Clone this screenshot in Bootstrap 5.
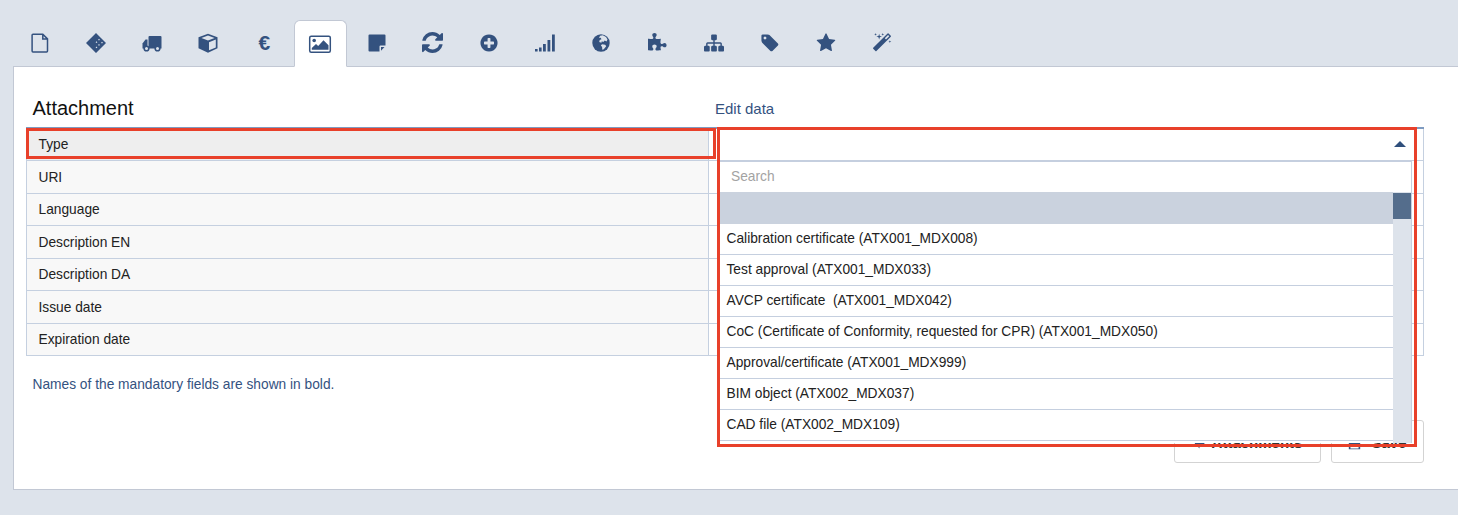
<!DOCTYPE html>
<html lang="en">
<head>
<meta charset="utf-8">
<title>Attachment</title>
<link href="https://cdn.jsdelivr.net/npm/bootstrap@5.3.0/dist/css/bootstrap.min.css" rel="stylesheet">
<style>
html,body{height:515px;overflow:hidden}
body{background:#dde3eb;font-family:"Liberation Sans",Arial,sans-serif;font-size:13.76px;color:#222;line-height:1.2}
.tabstrip{padding:20px 0 0 13px;gap:3.2px;border:0;position:relative;z-index:2;margin-bottom:-1px}
.tabstrip .nav-link{width:53px;height:47px;padding:0 0 2px;display:flex;align-items:center;justify-content:center;border:1px solid transparent;border-radius:6px 6px 0 0;color:#34527f;background:transparent;margin:0}
.tabstrip .nav-link.active{background:#fff;border-color:#c2c8d4 #c2c8d4 #fff;color:#34527f}
.tabstrip svg{fill:currentColor;display:block}
.euro{font-size:21px;font-weight:700;line-height:1}
.panelbox{margin-left:13px;height:424px;background:#fff;border:1px solid #c2c8d4;border-right:0;padding:0 34px 0 12px}
.headline{height:60px;align-items:flex-end;padding-bottom:8px}
.headline h1{width:682px;margin:0;padding-left:6.500px;font-size:20px;font-weight:400;color:#111;line-height:22px}
.headline span{padding-left:7px;font-size:15px;color:#34527f;line-height:21px}
.formwrap{position:relative}
.attrtable{table-layout:fixed;margin:0;border-color:#c5d0e0;--bs-table-border-color:#c5d0e0;border-top:2px solid #7f9bc0}
.attrtable th,.attrtable td{height:32.5px;padding:1.500px 11.500px 0;vertical-align:middle;font-size:13.76px;line-height:16px;font-weight:400;color:#222;box-shadow:none}
.attrtable th{width:682px;background:#f8f8f8}
.attrtable tr:first-child th{background:#eee}
.attrtable td{background:#fff}
.picker{position:absolute;left:694px;top:2px;width:692px;background:#fff}
.pickhead{height:31px;position:relative}
.caret{position:absolute;right:6px;top:12px;width:0;height:0;border-left:6px solid transparent;border-right:6px solid transparent;border-bottom:6px solid #2f4f7c}
.pickbody{border-top:2px solid #c5cfdf;border-right:1px solid #c5cfdf;height:283px;overflow:hidden}
.picksearch{height:30px;padding:0 11px;line-height:29px;color:#a3a3a3;font-size:13.76px}
.pickrows{height:252px;margin:0}
.picklist{flex:1;min-width:0}
.picklist .list-group-item{height:31px;padding:0 6.500px;line-height:29px;border:0;border-bottom:1px solid #c5cfdf;border-radius:0;color:#222;font-size:13.76px;white-space:pre}
.picklist .list-group-item.active{background:#cad2de;border-color:#cad2de;height:32px}
.pickscroll{width:18px;background:#dde3eb;padding-top:1px}
.pickscroll i{display:block;height:26px;background:#546d8c}
.redbox{position:absolute;border:3px solid #e8402a;pointer-events:none}
.redleft{left:0;top:1px;width:690px;height:31px}
.redright{left:691px;top:0;width:700px;height:320px}
.mandnote{margin:21px 0 0;padding-left:6.500px;color:#34527f;font-size:13.76px;line-height:16px}
.actionbar{justify-content:flex-end;gap:10px;margin-top:27px}
.actbtn{height:43px;border:1px solid #d3d3d3;border-radius:3px;background:#fff;color:#333;font-size:15px;font-weight:700;padding:4px 0 0;display:flex;align-items:center;justify-content:center;gap:6px}
.actbtn svg{fill:#34527f;display:block}
.btnback{width:147px}
.btnsave{width:93px;gap:10px}
</style>
</head>
<body>
<ul class="nav nav-tabs tabstrip">
<li class="nav-item"><a class="nav-link" href="#"><svg width="24" height="24" viewBox="0 0 24 24"><path d="M5 3.200h9.800l4.700 4.700v12.200q0 .9-.9.9H5q-.9 0-.9-.9V4.100q0-.9.9-.9z M14.800 3.200v4.700h4.700" fill="none" stroke="currentColor" stroke-width="1.500"/></svg></a></li>
<li class="nav-item"><a class="nav-link" href="#"><svg width="24" height="24" viewBox="0 0 24 24"><path fill-rule="evenodd" d="M2 12L12 2 22 12 12 22z M15 7.800l.9.9-.9.9-.9-.9z M18 10.800l.9.9-.9.9-.9-.9z M12.500 10.300l.9.9-.9.9-.9-.9z M15 13l.9.9-.9.9-.9-.9z M12.500 15.500l.9.9-.9.9-.9-.9z"/></svg></a></li>
<li class="nav-item"><a class="nav-link" href="#"><svg width="24" height="24" viewBox="0 0 24 24"><path d="M8.500 6a1 1 0 0 1 1-1h11a1 1 0 0 1 1 1v11.500h-13z"/><path d="M7.500 8.500H5.500L2.500 12.500v5h5z"/><circle cx="6.500" cy="17.500" r="2.300" fill="#dde3eb" stroke="currentColor" stroke-width="1.600"/><circle cx="17.500" cy="17.500" r="2.300" fill="#dde3eb" stroke="currentColor" stroke-width="1.600"/></svg></a></li>
<li class="nav-item"><a class="nav-link" href="#"><svg width="24" height="24" viewBox="0 0 24 24"><path d="M12 2.800l9.500 3.500v11L12 21.700l-9.500-4.400v-11z"/><path d="M12 4.600l6.600 2.500L12 9.600 5.400 7.100z M13 11.200l6.800-2.700v7.900L13 19.300z" fill="#dde3eb"/></svg></a></li>
<li class="nav-item"><a class="nav-link" href="#"><span class="euro">€</span></a></li>
<li class="nav-item"><a class="nav-link active" href="#"><svg width="24" height="24" viewBox="0 0 24 24"><rect x="1.700" y="5.200" width="20.600" height="16" rx="1.500" fill="none" stroke="currentColor" stroke-width="1.500"/><circle cx="6.200" cy="9.500" r="1.800"/><path d="M3.800 18.800V17l4.200-4 2.200 2 5.300-5.800 5 5v4.600z"/></svg></a></li>
<li class="nav-item"><a class="nav-link" href="#"><svg width="24" height="24" viewBox="0 0 24 24"><path d="M4.500 3.500h15a1 1 0 0 1 1 1v10h-5a1 1 0 0 0-1 1v5h-10a1 1 0 0 1-1-1v-15a1 1 0 0 1 1-1z"/><path d="M16 16h3.500L16 19.800z"/></svg></a></li>
<li class="nav-item"><a class="nav-link" href="#"><svg width="21" height="21" viewBox="0 0 1536 1536"><path d="M1511 928q0 5-1 7-64 268-268 434.500t-478 166.500q-146 0-282.500-55t-243.500-157l-129 129q-19 19-45 19t-45-19-19-45v-448q0-26 19-45t45-19h448q26 0 45 19t19 45-19 45l-137 137q71 66 161 102t187 36q134 0 250-65t186-179q11-17 53-117 8-23 30-23h192q13 0 22.500 9.500t9.500 22.500zm25-800v448q0 26-19 45t-45 19h-448q-26 0-45-19t-19-45 19-45l138-138q-148-137-349-137-134 0-250 65t-186 179q-11 17-53 117-8 23-30 23h-199q-13 0-22.500-9.500t-9.500-22.500v-7q65-268 270-434.500t480-166.500q146 0 284 55.500t245 156.500l130-129q19-19 45-19t45 19 19 45z"/></svg></a></li>
<li class="nav-item"><a class="nav-link" href="#"><svg width="20" height="20" viewBox="0 0 1792 1792"><path d="M1344 960v-128q0-26-19-45t-45-19h-256v-256q0-26-19-45t-45-19h-128q-26 0-45 19t-19 45v256h-256q-26 0-45 19t-19 45v128q0 26 19 45t45 19h256v256q0 26 19 45t45 19h128q26 0 45-19t19-45v-256h256q26 0 45-19t19-45zm320-64q0 209-103 385.500t-279.500 279.500-385.500 103-385.500-103-279.500-279.500-103-385.500 103-385.500 279.500-279.500 385.500-103 385.500 103 279.500 279.500 103 385.500z"/></svg></a></li>
<li class="nav-item"><a class="nav-link" href="#"><svg width="24" height="24" viewBox="0 0 24 24"><rect x="2" y="18" width="2.600" height="2.500"/><rect x="6" y="16.500" width="2.600" height="4"/><rect x="10" y="13" width="2.800" height="7.500"/><rect x="14.500" y="9" width="2.800" height="11.500"/><rect x="19" y="3.500" width="2.800" height="17"/></svg></a></li>
<li class="nav-item"><a class="nav-link" href="#"><svg width="24" height="24" viewBox="0 0 24 24"><circle cx="12" cy="12" r="8.700"/><path d="M11 4.800l2.800-.6 3.200 1.800 1.500 2.500-1 2-1.800-1-1.400 1.500-1.500-.8-.4 1.500-2.200-.8.500-2 1.800-.6-.8-1.500-1.600.2zM13 13.200l3.200.6 1 1.400-2.400 3-1.500.6-.2-2.800-1.200-1.400z" fill="#dde3eb"/></svg></a></li>
<li class="nav-item"><a class="nav-link" href="#"><svg width="20" height="20" viewBox="0 0 1792 1792"><path d="M1664 1098q0 81-44.500 135t-123.500 54q-41 0-77.500-17.500t-59-38-56.500-38-71-17.500q-110 0-110 124 0 39 16 115t15 115v5q-22 0-33 1-34 3-97.500 11.500t-115.500 13.500-98 5q-61 0-103-26.500t-42-83.500q0-37 17.500-71t38-56.500 38-59 17.500-77.500q0-79-54-123.500t-135-44.500q-84 0-143 45.500t-59 127.500q0 43 15 83t33.500 64.500 33.500 53 15 50.500q0 45-46 89-37 35-117 35-95 0-245-24-9-2-27.500-4t-27.500-4l-13-2q-1 0-3-1-2 0-2-1v-1024q2 1 17.500 3.500t34 5 21.500 3.500q150 24 245 24 80 0 117-35 46-44 46-89 0-22-15-50.500t-33.500-53-33.500-64.500-15-83q0-82 59-127.500t144-45.500q80 0 134 44.500t54 123.500q0 41-17.500 77.500t-38 59-38 56.500-17.500 71q0 57 42 83.500t103 26.500q64 0 180-15t163-17v2q-1 2-3.500 17.500t-5 34-3.500 21.500q-24 150-24 245 0 80 35 117 44 46 89 46 22 0 50.500-15t53-33.500 64.500-33.500 83-15q82 0 127.500 59t45.500 143z"/></svg></a></li>
<li class="nav-item"><a class="nav-link" href="#"><svg width="20" height="20" viewBox="0 0 1792 1792"><path d="M1792 1248v320q0 40-28 68t-68 28h-320q-40 0-68-28t-28-68v-320q0-40 28-68t68-28h96v-192h-512v192h96q40 0 68 28t28 68v320q0 40-28 68t-68 28h-320q-40 0-68-28t-28-68v-320q0-40 28-68t68-28h96v-192h-512v192h96q40 0 68 28t28 68v320q0 40-28 68t-68 28h-320q-40 0-68-28t-28-68v-320q0-40 28-68t68-28h96v-192q0-52 38-90t90-38h512v-192h-96q-40 0-68-28t-28-68v-320q0-40 28-68t68-28h320q40 0 68 28t28 68v320q0 40-28 68t-68 28h-96v192h512q52 0 90 38t38 90v192h96q40 0 68 28t28 68z"/></svg></a></li>
<li class="nav-item"><a class="nav-link" href="#"><svg width="20" height="20" viewBox="0 0 1792 1792"><path d="M576 448q0-53-37.500-90.500t-90.500-37.500-90.500 37.500-37.500 90.500 37.500 90.500 90.500 37.500 90.500-37.500 37.500-90.500zm1067 576q0 53-37 90l-491 492q-39 37-91 37-53 0-90-37l-715-716q-38-37-64.500-101t-26.500-117v-416q0-52 38-90t90-38h416q53 0 117 26.500t102 64.500l715 714q37 39 37 91z"/></svg></a></li>
<li class="nav-item"><a class="nav-link" href="#"><svg width="20" height="20" viewBox="0 0 1792 1792"><path d="M1728 647q0 22-26 48l-363 354 86 500q1 7 1 20 0 21-10.500 35.500t-30.500 14.500q-19 0-40-12l-449-236-449 236q-22 12-40 12-21 0-31.500-14.500t-10.500-35.500q0-6 2-20l86-500-364-354q-25-27-25-48 0-37 56-46l502-73 225-455q19-41 49-41t49 41l225 455 502 73q56 9 56 46z"/></svg></a></li>
<li class="nav-item"><a class="nav-link" href="#"><svg width="20" height="20" viewBox="0 0 1792 1792"><path d="M1254 581l293-293-107-107-293 293zm447-293q0 27-18 45l-1286 1286q-18 18-45 18t-45-18l-198-198q-18-18-18-45t18-45l1286-1286q18-18 45-18t45 18l198 198q18 18 18 45zm-1351-190l98 30-98 30-30 98-30-98-98-30 98-30 30-98zm350 162l196 60-196 60-60 196-60-196-196-60 196-60 60-196zm930 478l98 30-98 30-30 98-30-98-98-30 98-30 30-98zm-640-640l98 30-98 30-30 98-30-98-98-30 98-30 30-98z"/></svg></a></li>
</ul>
<main class="panelbox">
  <div class="d-flex headline"><h1>Attachment</h1><span>Edit data</span></div>
  <div class="formwrap">
    <table class="table table-bordered attrtable">
      <tbody>
        <tr><th scope="row">Type</th><td></td></tr>
        <tr><th scope="row">URI</th><td></td></tr>
        <tr><th scope="row">Language</th><td></td></tr>
        <tr><th scope="row">Description EN</th><td></td></tr>
        <tr><th scope="row">Description DA</th><td></td></tr>
        <tr><th scope="row">Issue date</th><td></td></tr>
        <tr><th scope="row">Expiration date</th><td></td></tr>
      </tbody>
    </table>
    <div class="picker">
      <div class="pickhead"><span class="caret"></span></div>
      <div class="pickbody">
        <div class="picksearch">Search</div>
        <div class="d-flex pickrows">
          <ul class="list-group picklist">
            <li class="list-group-item active"></li>
            <li class="list-group-item">Calibration certificate (ATX001_MDX008)</li>
            <li class="list-group-item">Test approval (ATX001_MDX033)</li>
            <li class="list-group-item">AVCP certificate  (ATX001_MDX042)</li>
            <li class="list-group-item">CoC (Certificate of Conformity, requested for CPR) (ATX001_MDX050)</li>
            <li class="list-group-item">Approval/certificate (ATX001_MDX999)</li>
            <li class="list-group-item">BIM object (ATX002_MDX037)</li>
            <li class="list-group-item">CAD file (ATX002_MDX109)</li>
          </ul>
          <div class="pickscroll"><i></i></div>
        </div>
      </div>
    </div>
    <div class="redbox redleft"></div>
    <div class="redbox redright"></div>
  </div>
  <p class="mandnote">Names of the mandatory fields are shown in bold.</p>
  <div class="d-flex actionbar">
    <button type="button" class="btn actbtn btnback"><svg width="13" height="13" viewBox="0 0 16 16"><path d="M8 2L2 8l6 6V10h6V6H8z"/></svg>Attachments</button>
    <button type="button" class="btn actbtn btnsave"><svg width="13" height="13" viewBox="0 0 16 16"><path d="M1 1h11l3 3v11H1zM4 2v4h7V2zM3 9v5h10V9z"/></svg>Save</button>
  </div>
</main>
<script src="https://cdn.jsdelivr.net/npm/bootstrap@5.3.0/dist/js/bootstrap.bundle.min.js"></script>
</body>
</html>
